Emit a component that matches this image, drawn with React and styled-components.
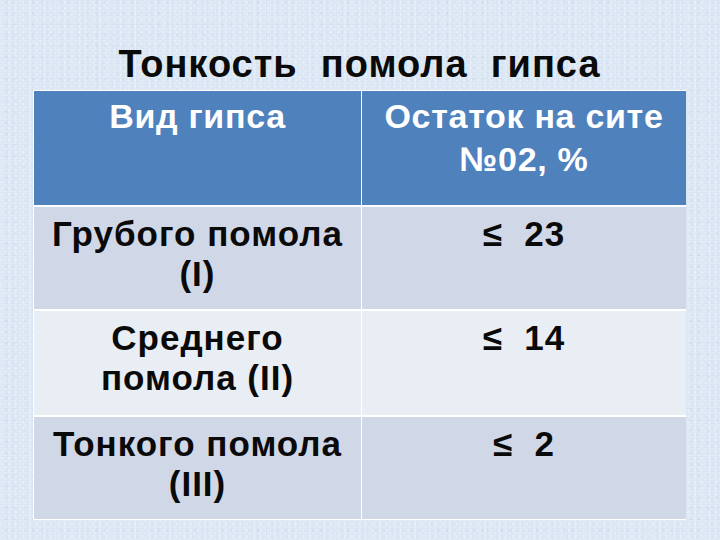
import React from "react";
import styled, { createGlobalStyle } from "styled-components";

const Global = createGlobalStyle`
  html, body { margin: 0; padding: 0; }
  body {
    width: 720px;
    height: 540px;
    overflow: hidden;
    font-family: "Liberation Sans", Arial, sans-serif;
  }
`;

const Slide = styled.div`
  width: 720px;
  height: 540px;
  box-sizing: border-box;
  padding: 43px 34px 0 33px;
  display: flex;
  flex-direction: column;
  align-items: stretch;
  background-color: #dbe7f4;
  background-image:
    radial-gradient(circle at 30% 40%, rgba(255,255,255,0.35) 0 1px, transparent 1.5px),
    radial-gradient(circle at 70% 20%, rgba(190,208,230,0.35) 0 1px, transparent 1.5px),
    repeating-linear-gradient(90deg, rgba(255,255,255,0.12) 0 1px, rgba(200,214,234,0.12) 1px 3px, transparent 3px 5px),
    repeating-linear-gradient(0deg, rgba(255,255,255,0.12) 0 2px, rgba(196,212,234,0.12) 2px 3px, transparent 3px 6px);
  background-size: 7px 6px, 9px 11px, auto, auto;
`;

const Title = styled.h1`
  margin: 0 0 4px;
  font-size: 38px;
  line-height: 43px;
  font-weight: 700;
  color: #0a0a0a;
  text-align: center;
  white-space: pre;
  letter-spacing: 1px;
`;

const Table = styled.div`
  display: grid;
  grid-template-columns: 327px 324px;
  grid-template-rows: 114px 102px 104px 102px;
  gap: 2px 1px;
  padding: 1px 0 1px 0;
  background: #ffffff;
  width: 653px;
  box-sizing: border-box;
  border-left: 1px solid #ffffff;
  border-right: 1px solid #ffffff;
`;

const Cell = styled.div`
  background: ${(p) => p.$bg};
  color: ${(p) => p.$color};
  font-size: ${(p) => p.$fs}px;
  letter-spacing: ${(p) => p.$ls}px;
  line-height: ${(p) => p.$lh}px;
  font-weight: 700;
  text-align: center;
  white-space: pre-line;
  padding: ${(p) => p.$pt}px 12px 0;
  box-sizing: border-box;
`;

const HEAD = "#4f81bd";
const DARK = "#d0d8e8";
const LIGHT = "#e9edf4";

const rows = [
  { kind: "Грубого помола (I)", value: "≤  23", bg: DARK },
  { kind: "Среднего помола (II)", value: "≤  14", bg: LIGHT },
  { kind: "Тонкого помола (III)", value: "≤  2", bg: DARK },
];

export default function App() {
  return (
    <>
      <Global />
      <Slide>
        <Title>{"Тонкость  помола  гипса"}</Title>
        <Table>
          <Cell $bg={HEAD} $color="#ffffff" $fs={34} $ls={0.7} $lh={43} $pt={4}>
            Вид гипса
          </Cell>
          <Cell $bg={HEAD} $color="#ffffff" $fs={34} $ls={0.7} $lh={43} $pt={4}>
            Остаток на сите №02, %
          </Cell>
          {rows.map((r) => (
            <React.Fragment key={r.kind}>
              <Cell $bg={r.bg} $color="#0a0a0a" $fs={35} $ls={1} $lh={40} $pt={7}>
                {r.kind}
              </Cell>
              <Cell $bg={r.bg} $color="#0a0a0a" $fs={35} $ls={1} $lh={40} $pt={7} style={{ whiteSpace: "pre" }}>
                {r.value}
              </Cell>
            </React.Fragment>
          ))}
        </Table>
      </Slide>
    </>
  );
}
